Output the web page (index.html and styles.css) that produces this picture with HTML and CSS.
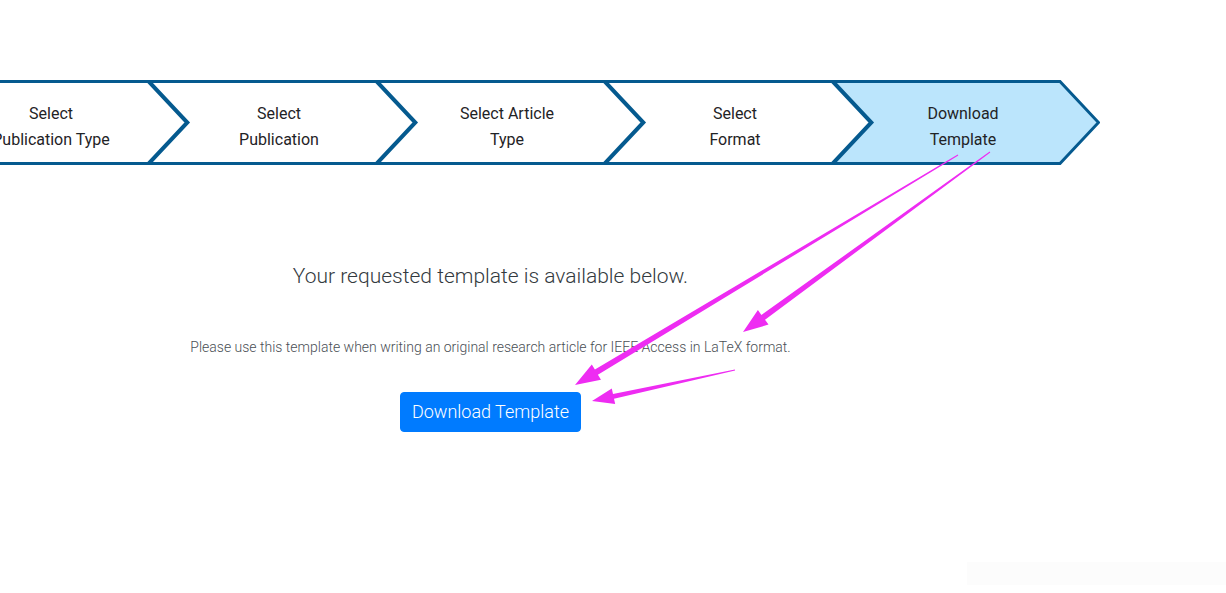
FILE: index.html
```html
<!DOCTYPE html>
<html lang="en">
<head>
<meta charset="utf-8">
<title>Download Template</title>
<link rel="stylesheet" href="styles.css">
</head>
<body>
<div class="page">
  <nav class="steps">
    <div class="step">
      <svg class="step-shape" viewBox="0 0 268 85" width="268" height="85"><polygon points="1.5,1.5 228,1.5 266.5,42.5 228,83.5 1.5,83.5 40,42.5" /></svg>
      <div class="step-label">Select<br>Publication Type</div>
    </div>
    <div class="step">
      <svg class="step-shape" viewBox="0 0 268 85" width="268" height="85"><polygon points="1.5,1.5 228,1.5 266.5,42.5 228,83.5 1.5,83.5 40,42.5" /></svg>
      <div class="step-label">Select<br>Publication</div>
    </div>
    <div class="step">
      <svg class="step-shape" viewBox="0 0 268 85" width="268" height="85"><polygon points="1.5,1.5 228,1.5 266.5,42.5 228,83.5 1.5,83.5 40,42.5" /></svg>
      <div class="step-label">Select Article<br>Type</div>
    </div>
    <div class="step">
      <svg class="step-shape" viewBox="0 0 268 85" width="268" height="85"><polygon points="1.5,1.5 228,1.5 266.5,42.5 228,83.5 1.5,83.5 40,42.5" /></svg>
      <div class="step-label">Select<br>Format</div>
    </div>
    <div class="step active">
      <svg class="step-shape" viewBox="0 0 268 85" width="268" height="85"><polygon points="1.5,1.5 228,1.5 266.5,42.5 228,83.5 1.5,83.5 40,42.5" /></svg>
      <div class="step-label">Download<br>Template</div>
    </div>
  </nav>

  <main class="content">
    <h2 class="title">Your requested template is available below.</h2>
    <p class="desc">Please use this template when writing an original research article for IEEE Access in LaTeX format.</p>
    <a class="btn" href="#">Download Template</a>
  </main>

  <div class="corner-shade"></div>
</div>

<svg class="annotations" width="1226" height="593" viewBox="0 0 1226 593">
  <polygon points="958.3,155.4 597.9,374.7 601,379.8 575,385 591.8,364.4 594.9,369.5 957.7,154.6"/>
  <polygon points="990.3,152.4 765,319.7 768.5,324.6 743,332 757.9,310 761.4,314.9 989.7,151.6"/>
  <polygon points="735.1,370.5 614,398.7 615.2,404.1 592,401 611.8,388.5 613,393.9 734.9,369.5"/>
</svg>
</body>
</html>
```

FILE: styles.css
```css
html, body {
  margin: 0;
  padding: 0;
  background: #ffffff;
}

body {
  font-family: Roboto, "Liberation Sans", Arial, sans-serif;
  color: #212529;
  overflow: hidden;
  width: 1226px;
  height: 593px;
  position: relative;
}

.page {
  padding-top: 80px;
}

.steps {
  display: flex;
  margin-left: -80px;
}

.step {
  position: relative;
  flex: 0 0 268px;
  height: 85px;
  margin-right: -40px;
  display: flex;
  align-items: center;
  justify-content: center;
}

.step-shape {
  position: absolute;
  left: 0;
  top: 0;
  display: block;
}

.step-shape polygon {
  fill: #ffffff;
  stroke: #055a8f;
  stroke-width: 3;
  stroke-linejoin: miter;
}

.step.active .step-shape polygon {
  fill: #bbe5fc;
}

.step-label {
  position: relative;
  font-size: 16px;
  line-height: 26px;
  text-align: center;
  color: #1f2326;
  padding-right: 6px;
  padding-top: 8px;
}

.content {
  width: 981px;
  text-align: center;
}

.title {
  margin: 99px 0 0;
  font-size: 21px;
  line-height: 25px;
  font-weight: 300;
  color: #333a40;
}

.desc {
  margin: 48px 0 0;
  font-size: 14px;
  line-height: 21px;
  font-weight: 300;
  color: #4a4f55;
}

.btn {
  display: inline-block;
  margin-top: 34px;
  padding: 6px 11px;
  font-size: 18px;
  line-height: 26px;
  font-weight: 300;
  color: #ffffff;
  background: #007bff;
  border: 1px solid #007bff;
  border-radius: 4px;
  text-decoration: none;
}

.corner-shade {
  position: absolute;
  left: 967px;
  top: 562px;
  width: 259px;
  height: 23px;
  background: #fcfcfc;
}

.annotations {
  position: absolute;
  left: 0;
  top: 0;
  pointer-events: none;
}

.annotations polygon {
  fill: #ee2cf2;
}
```
